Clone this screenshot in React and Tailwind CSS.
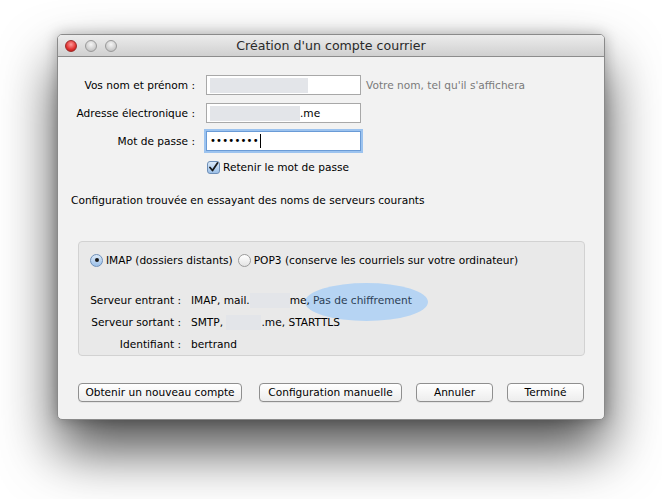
import React from 'react';

const font = { fontFamily: '"Lucida Grande", "DejaVu Sans", "Liberation Sans", sans-serif' };

function Redact({ w }) {
  return <span className="inline-block h-[15px] bg-[#e3e5e9] align-middle" style={{ width: w }} />;
}

function Field({ label, children, focused }) {
  return (
    <div className="flex items-center h-[20px]">
      <div className="w-[139px] text-right pr-[2px]">{label}</div>
      <div
        className={
          focused
            ? 'ml-[9px] w-[155px] h-[20px] bg-white border border-[#6a9bd6] shadow-[0_0_0_2px_#9cc3ef] flex items-center px-[3px]'
            : 'ml-[9px] w-[155px] h-[20px] bg-white border border-[#a8a8a8] flex items-center px-[3px]'
        }
      >
        {children}
      </div>
    </div>
  );
}

function Button({ children, w }) {
  return (
    <button
      className="h-[19px] rounded-[4px] border border-[#8f8f8f] bg-gradient-to-b from-white to-[#ededed] text-[10.6px] leading-none text-black shadow-[0_1px_0_rgba(0,0,0,0.06)]"
      style={{ width: w }}
    >
      {children}
    </button>
  );
}

export default function App() {
  return (
    <div className="w-[662px] h-[499px] bg-white overflow-hidden pt-[34px] pl-[57px] text-[10.6px] leading-[16px] text-black" style={font}>
      <div className="relative w-[548px] h-[386px] rounded-[5px] bg-[#f2f2f2] border border-[#8a8a8a] shadow-[0_30px_55px_rgba(0,0,0,0.7),0_0_14px_rgba(0,0,0,0.25)] overflow-hidden">
        {/* Title bar */}
        <div className="relative h-[22px] bg-gradient-to-b from-[#ececec] to-[#d0d0d0] border-b border-[#8c8c8c] flex items-center justify-center">
          <div className="absolute left-[7px] top-[5px] flex gap-[8px]">
            <span className="w-[12px] h-[12px] rounded-full bg-[radial-gradient(circle_at_50%_35%,#ff9a9a,#e0302e_60%,#a8120f)] border border-[#9b2a28]" />
            <span className="w-[12px] h-[12px] rounded-full bg-[radial-gradient(circle_at_50%_35%,#f5f5f5,#c9c9c9_70%,#a9a9a9)] border border-[#999]" />
            <span className="w-[12px] h-[12px] rounded-full bg-[radial-gradient(circle_at_50%_35%,#f5f5f5,#c9c9c9_70%,#a9a9a9)] border border-[#999]" />
          </div>
          <span className="text-[12.6px] text-[#2a2a2a]">Création d'un compte courrier</span>
        </div>

        {/* Body */}
        <div className="pt-[18px]">
          <div className="flex flex-col gap-[8px]">
            <div className="flex items-center">
              <Field label="Vos nom et prénom :">
                <Redact w={98} />
              </Field>
              <span className="ml-[5px] text-[#7a7a7a]">Votre nom, tel qu'il s'affichera</span>
            </div>
            <Field label="Adresse électronique :">
              <Redact w={90} />
              <span>.me</span>
            </Field>
            <Field label="Mot de passe :" focused>
              <span className="tracking-[0.2px] text-[10px]">••••••••</span>
              <span className="ml-[1px] w-px h-[14px] bg-black" />
            </Field>
          </div>

          <div className="flex items-center mt-[8px] ml-[149px] h-[16px]">
            <span className="w-[13px] h-[13px] rounded-[3px] border border-[#6e8fb8] bg-gradient-to-b from-[#dbe9f8] to-[#9cc0e8] flex items-center justify-center">
              <svg width="11" height="11" viewBox="0 0 11 11">
                <path d="M2 5.5 L4.5 8.5 L9.5 1" fill="none" stroke="#1a1a1a" strokeWidth="1.8" strokeLinecap="round" strokeLinejoin="round" />
              </svg>
            </span>
            <span className="ml-[3px]">Retenir le mot de passe</span>
          </div>

          <div className="mt-[17px] ml-[13px]">Configuration trouvée en essayant des noms de serveurs courants</div>

          {/* Group box */}
          <div className="relative mt-[33px] ml-[20px] w-[507px] h-[115px] rounded-[4px] bg-[#e9e9e9] border border-[#d2d2d2]">
            {/* annotation */}
            <div className="absolute left-[226px] top-[41px] w-[123px] h-[38px] rounded-[50%] bg-[#b6d4f3]" />

            <div className="relative flex items-center mt-[10px] ml-[11px] h-[16px]">
              <span className="w-[13px] h-[13px] rounded-full border border-[#6e8fb8] bg-gradient-to-b from-[#dbe9f8] to-[#9cc0e8] flex items-center justify-center">
                <span className="w-[4px] h-[4px] rounded-full bg-[#1a1a1a]" />
              </span>
              <span className="ml-[3px]">IMAP (dossiers distants)</span>
              <span className="ml-[5px] w-[13px] h-[13px] rounded-full border border-[#9a9a9a] bg-gradient-to-b from-white to-[#e4e4e4]" />
              <span className="ml-[3px]">POP3 (conserve les courriels sur votre ordinateur)</span>
            </div>

            <div className="relative mt-[24px] grid grid-cols-[102px_1fr] gap-y-[6px] gap-x-[10px]">
              <div className="text-right h-[16px]">Serveur entrant :</div>
              <div className="flex items-center h-[16px]">
                IMAP, mail.<Redact w={40} />me, <span className="ml-[3px] text-[#2c3e55]">Pas de chiffrement</span>
              </div>
              <div className="text-right h-[16px]">Serveur sortant :</div>
              <div className="flex items-center h-[16px]">
                SMTP,&nbsp;<Redact w={35} />.me, STARTTLS
              </div>
              <div className="text-right h-[16px]">Identifiant :</div>
              <div className="h-[16px]">bertrand</div>
            </div>
          </div>

          {/* Buttons */}
          <div className="flex mt-[27px] ml-[20px] gap-[17px]">
            <Button w={164}>Obtenir un nouveau compte</Button>
            <div className="flex gap-[14px]">
              <Button w={143}>Configuration manuelle</Button>
              <Button w={77}>Annuler</Button>
              <Button w={77}>Terminé</Button>
            </div>
          </div>
        </div>
      </div>
    </div>
  );
}
